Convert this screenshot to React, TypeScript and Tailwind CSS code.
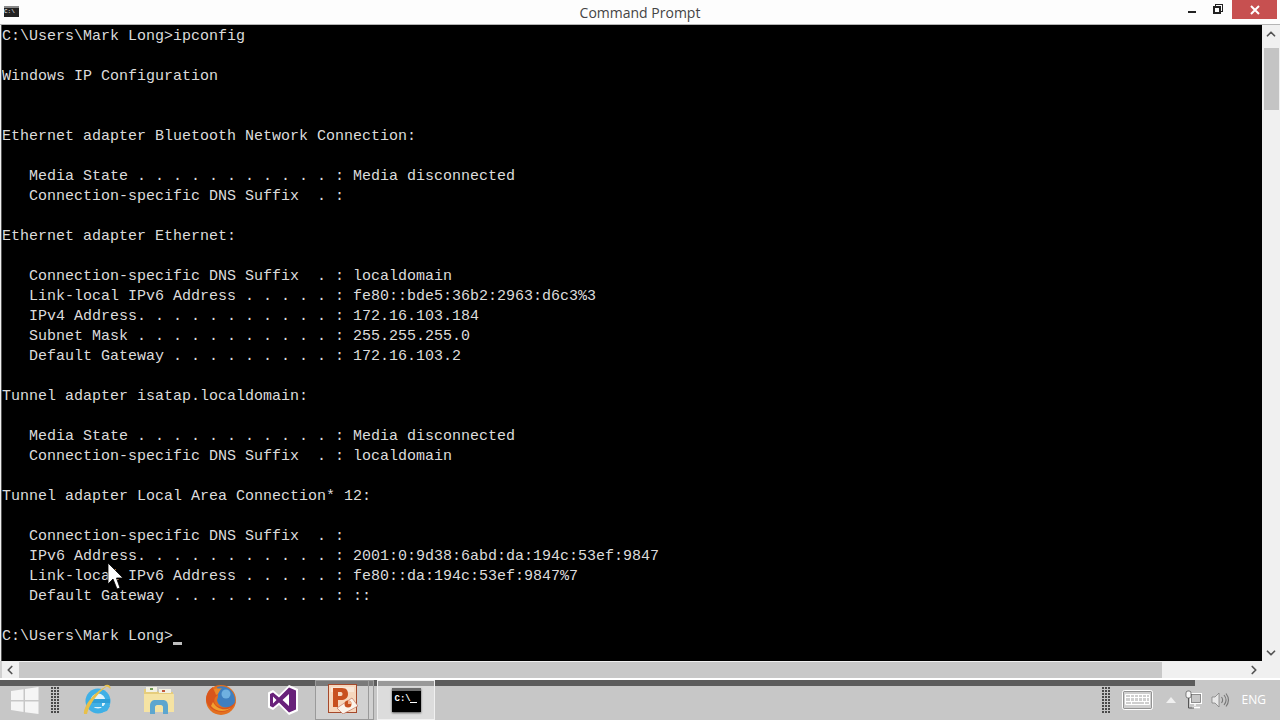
import { ChevronDown, ChevronLeft, ChevronRight, ChevronUp } from "lucide-react";

const lines = [
  "C:\\Users\\Mark Long>ipconfig",
  "",
  "Windows IP Configuration",
  "",
  "",
  "Ethernet adapter Bluetooth Network Connection:",
  "",
  "   Media State . . . . . . . . . . . : Media disconnected",
  "   Connection-specific DNS Suffix  . :",
  "",
  "Ethernet adapter Ethernet:",
  "",
  "   Connection-specific DNS Suffix  . : localdomain",
  "   Link-local IPv6 Address . . . . . : fe80::bde5:36b2:2963:d6c3%3",
  "   IPv4 Address. . . . . . . . . . . : 172.16.103.184",
  "   Subnet Mask . . . . . . . . . . . : 255.255.255.0",
  "   Default Gateway . . . . . . . . . : 172.16.103.2",
  "",
  "Tunnel adapter isatap.localdomain:",
  "",
  "   Media State . . . . . . . . . . . : Media disconnected",
  "   Connection-specific DNS Suffix  . : localdomain",
  "",
  "Tunnel adapter Local Area Connection* 12:",
  "",
  "   Connection-specific DNS Suffix  . :",
  "   IPv6 Address. . . . . . . . . . . : 2001:0:9d38:6abd:da:194c:53ef:9847",
  "   Link-local IPv6 Address . . . . . : fe80::da:194c:53ef:9847%7",
  "   Default Gateway . . . . . . . . . : ::",
  "",
];

const Gripper = () => (
  <div className="grid grid-cols-3 gap-x-[1px] gap-y-[1px] w-[8px]">
    {Array.from({ length: 27 }).map((_, i) => (
      <span key={i} className="w-[2px] h-[2px] bg-[#4a4a4a]" />
    ))}
  </div>
);

const WindowsLogo = () => (
  <svg width="28" height="27" viewBox="0 0 28 27">
    <path d="M0 4 L12.5 2.2 V13 H0 Z M14 2 L27.5 0 V13 H14 Z M0 14.5 H12.5 V25 L0 23 Z M14 14.5 H27.5 V27 L14 25.2 Z" fill="#f5f5f5" />
  </svg>
);

const IeIcon = () => (
  <svg width="32" height="32" viewBox="0 0 32 32">
    <circle cx="16" cy="17" r="12.5" fill="#3fb0e6" />
    <circle cx="16" cy="17" r="7.5" fill="#dff3fb" />
    <rect x="8" y="15" width="20" height="4" fill="#2f9fd8" />
    <path d="M20 22 H28 L25 27 L18 29 Z" fill="#3fb0e6" />
    <rect x="9" y="19" width="11" height="4" fill="#3fb0e6" />
    <path d="M2 30 C1 22 14 5 28 1 C20 4 8 18 5 30 Z" fill="#e8c04a" />
    <path d="M22 1.5 C26 0 29 1 28.5 5 L26 3 Z" fill="#e8c04a" />
  </svg>
);

const FolderIcon = () => (
  <svg width="32" height="29" viewBox="0 0 32 29">
    <path d="M1 3 H13 L15 6 H30 V26 H1 Z" fill="#e6cd7c" />
    <rect x="3" y="1" width="11" height="5" fill="#f3f1e2" />
    <rect x="16" y="3" width="12" height="4" fill="#f3f1e2" />
    <rect x="7" y="2" width="3" height="2" fill="#6f9a52" />
    <rect x="19" y="4" width="3" height="2" fill="#c45a3a" />
    <path d="M1 8 H31 V26 H1 Z" fill="#f5e3a3" />
    <path d="M7 28 V20 C7 15 10 14 12 14 H20 C23 14 25 16 25 20 V28 H20 V21 C20 20 19 19 18 19 H14 C13 19 12 20 12 21 V28 Z" fill="#5da6cf" />
  </svg>
);

const FirefoxIcon = () => (
  <svg width="32" height="32" viewBox="0 0 32 32">
    <circle cx="16" cy="16" r="15" fill="#e3701f" />
    <path d="M12 3 C20 0 30 6 30 16 C30 20 28 22 25 23 C19 25 13 22 12 16 C14 12 13 7 12 3 Z" fill="#3f7fbf" />
    <circle cx="21" cy="10" r="4.5" fill="#6fb0e0" />
    <path d="M1 16 C3 28 24 35 31 17 C27 24 17 26 11 21 C8 18 9 13 13 11 C10 9 8 6 8 3 C3 6 1 11 1 16 Z" fill="#d9551c" />
    <path d="M6 22 C11 28 21 29 27 23 C21 27 12 26 8 18 Z" fill="#f0a030" />
    <path d="M9 5 C12 4 15 5 17 4 C14 7 14 10 11 11 Z" fill="#ea8a2a" />
  </svg>
);

const VsIcon = () => (
  <svg width="32" height="32" viewBox="0 0 32 32">
    <path d="M22 1 L31 5 V27 L22 31 L12 21 L6 26 L1 23.5 V8.5 L6 6 L12 11 Z" fill="#fff" />
    <path d="M22 3.5 L29 6.5 V25.5 L22 28.5 L12 18.5 L6 23.5 L3 22 V10 L6 8.5 L12 13.5 Z" fill="#68217a" />
    <path d="M22 10 L15.5 16 L22 22 Z M6 12.5 V19.5 L9.5 16 Z" fill="#fff" />
  </svg>
);

const PptIcon = () => (
  <svg width="30" height="30" viewBox="0 0 30 30">
    <rect x="0.5" y="0.5" width="28" height="28" fill="#f6d7bd" stroke="#a5492b" />
    <path d="M3 3 H26 V8 H3 Z" fill="#f9e6d6" />
    <path d="M5 4 H14 C19 4 20 7 20 10 C20 14 17 16 13 16 H10 V23 H5 Z M10 8 V12 H13 C15 12 15 8 13 8 Z" fill="#c8501e" />
    <path d="M9 24 L24 14 L30 22 L15 30 Z" fill="#fbf3ea" stroke="#b9604a" strokeWidth="0.6" />
    <circle cx="20" cy="20" r="3.5" fill="#c8501e" />
    <path d="M20 20 L20 16.5 A3.5 3.5 0 0 1 23.5 20 Z" fill="#f2b48f" />
  </svg>
);

const CmdIcon = () => (
  <div className="w-[29px] h-[24px] bg-black border-t-[3px] border-[#6a6a6a] relative shadow-[0_1px_2px_#555]">
    <span className="absolute left-[3px] top-[1px] text-[9px] leading-[14px] text-white font-['Liberation_Mono',monospace] font-bold">C:\</span>
    <span className="absolute left-[18px] top-[11px] w-[7px] h-[1px] bg-white" />
  </div>
);

const KeyboardIcon = () => (
  <svg width="31" height="20" viewBox="0 0 31 20">
    <rect x="0.5" y="0.5" width="30" height="19" rx="2" fill="#cfcfcf" stroke="#fff" />
    <rect x="1.5" y="1.5" width="28" height="17" rx="1" fill="none" stroke="#6a6a6a" strokeWidth="0.6" />
    <path d="M3.5 4.5 H27.5 V14.5 H3.5 Z M3.5 7.5 H27.5 M3.5 11.5 H27.5 M8.5 4.5 V11.5 M12.5 4.5 V11.5 M16.5 4.5 V11.5 M20.5 4.5 V11.5 M24.5 4.5 V11.5 M9.5 11.5 V14.5 M22.5 11.5 V14.5" fill="none" stroke="#fff" />
  </svg>
);

const NetworkIcon = () => (
  <svg width="18" height="20" viewBox="0 0 18 20">
    <rect x="5.5" y="3.5" width="11" height="10" fill="none" stroke="#fff" />
    <rect x="6.5" y="4.5" width="9" height="8" fill="none" stroke="#666" strokeWidth="0.6" />
    <path d="M10 14 V16 M7 17.5 H15" stroke="#fff" strokeWidth="1.4" />
    <rect x="1" y="1" width="5" height="7" rx="2" fill="#f7f7f7" stroke="#555" strokeWidth="0.7" />
    <path d="M3.5 8 V18 H9" fill="none" stroke="#555" strokeWidth="1" />
  </svg>
);

const SpeakerIcon = () => (
  <svg width="18" height="16" viewBox="0 0 18 16">
    <path d="M1 5 H4 L8 1 V15 L4 11 H1 Z" fill="#e8e8e8" stroke="#777" strokeWidth="0.7" />
    <path d="M10.5 5 C12 7 12 9 10.5 11 M13 3 C15.5 6 15.5 10 13 13 M15 1.5 C18 5.5 18 10.5 15 14.5" fill="none" stroke="#777" strokeWidth="1.1" />
  </svg>
);

const Cursor = () => (
  <svg className="absolute left-[107px] top-[562px]" width="17" height="29" viewBox="0 0 17 29">
    <path d="M1 1 V22 L6 17 L10 27 L13 26 L9.5 16 L16 16 Z" fill="#fff" stroke="#000" strokeWidth="0.8" />
  </svg>
);

const App = () => {
  return (
    <div className="relative w-[1280px] h-[720px] overflow-hidden flex flex-col bg-white">

      {/* TITLE BAR */}
      <div className="h-[25px] shrink-0 flex items-start bg-[#fdfdfd] border-b border-[#b5b5b5]">
        <div className="w-[15px] h-[11px] mt-[6px] ml-[4px] bg-[#222] border-t-2 border-[#888] text-[6px] leading-[8px] text-white font-['Liberation_Mono',monospace]">C:\</div>
        <div className="flex-1 h-full pl-[82px] text-center text-[14px] leading-[25px] text-[#444] font-['Open_Sans',sans-serif]">Command Prompt</div>
        <div className="flex items-start w-[98px] mr-[3px]">
          <span className="w-[8px] h-[2px] mt-[11px] ml-[9px] bg-[#222]" />
          <div className="relative w-[10px] h-[10px] mt-[4px] ml-[17px]">
            <span className="absolute right-0 top-0 w-[8px] h-[8px] border border-[#222]" />
            <span className="absolute left-0 bottom-0 w-[8px] h-[8px] border-2 border-[#222] bg-[#fdfdfd]" />
          </div>
          <div className="w-[45px] h-[19px] ml-[9px] bg-[#c75050] text-white flex items-center justify-center">
            <svg width="10" height="10" viewBox="0 0 10 10"><path d="M1 1 L9 9 M9 1 L1 9" stroke="#fff" strokeWidth="2" /></svg>
          </div>
        </div>
      </div>

      {/* CONSOLE */}
      <div className="flex h-[636px] shrink-0 bg-[#f0f0f0]">
        <div className="w-[1261px] h-full ml-[1px] pt-[2px] bg-black overflow-hidden border-l border-[#555]">
          <pre className="font-['Liberation_Mono',monospace] text-[15px] leading-[20px] text-[#dcdcdc] m-0">
            {lines.map((l, i) => <div key={i} className="h-[20px]">{l}</div>)}
            <div className="h-[20px] flex items-center">
              <span>C:\Users\Mark Long&gt;</span>
              <span className="w-[9px] h-[3px] mt-[12px] bg-[#bdbdbd]" />
            </div>
          </pre>
        </div>
        <div className="w-[18px] flex flex-col items-center">
          <ChevronUp size={14} strokeWidth={3} className="mt-[2px] text-[#555]" />
          <div className="w-[15px] h-[62px] mt-[7px] bg-[#c4c4c4]" />
          <ChevronDown size={14} strokeWidth={3} className="mt-auto mb-[1px] text-[#555]" />
        </div>
      </div>

      {/* H SCROLL */}
      <div className="flex items-center h-[17px] shrink-0 bg-[#f0f0f0] border-l-2 border-[#d0d0d0]">
        <ChevronLeft size={14} strokeWidth={3} className="ml-[1px] text-[#555]" />
        <div className="w-[1143px] h-[16px] ml-[2px] bg-[#c8c8c8]" />
        <ChevronRight size={14} strokeWidth={3} className="ml-auto mr-[19px] text-[#555]" />
      </div>
      <div className="h-[2px] shrink-0 bg-white" />

      {/* TASKBAR */}
      <div className="h-[40px] shrink-0 flex flex-col bg-[#c7c7c7]">
        <div className="h-[6px] shrink-0 w-[1195px] bg-[#5c5c5c]" />
        <div className="h-[34px] shrink-0 flex items-center pb-[6px]">
          <div className="ml-[11px]"><WindowsLogo /></div>
          <div className="ml-[12px]"><Gripper /></div>
          <div className="ml-[23px]"><IeIcon /></div>
          <div className="ml-[29px]"><FolderIcon /></div>
          <div className="ml-[30px]"><FirefoxIcon /></div>
          <div className="ml-[30px]"><VsIcon /></div>
          <div className="flex h-[40px] ml-[16px] w-[59px] items-center border border-[#9a9a9a] bg-[#ffffff30]">
            <div className="flex-1 flex justify-center border-r border-[#9a9a9a] h-full items-center pb-[3px] pl-[2px]"><PptIcon /></div>
            <div className="w-[4px]" />
          </div>
          <div className="flex h-[40px] ml-[3px] w-[58px] justify-center items-center bg-[#ffffff60] border border-[#f0f0f0]"><CmdIcon /></div>
          <div className="ml-auto"><Gripper /></div>
          <div className="ml-[12px]"><KeyboardIcon /></div>
          <span className="ml-[13px] w-0 h-0 border-x-[5px] border-x-transparent border-b-[6px] border-b-[#f0f0f0]" />
          <div className="ml-[9px]"><NetworkIcon /></div>
          <div className="ml-[8px]"><SpeakerIcon /></div>
          <div className="ml-[13px] mr-[14px] text-[12px] text-white font-['Open_Sans',sans-serif]">ENG</div>
        </div>
      </div>

      <Cursor />
    </div>
  );
};

export default App;
